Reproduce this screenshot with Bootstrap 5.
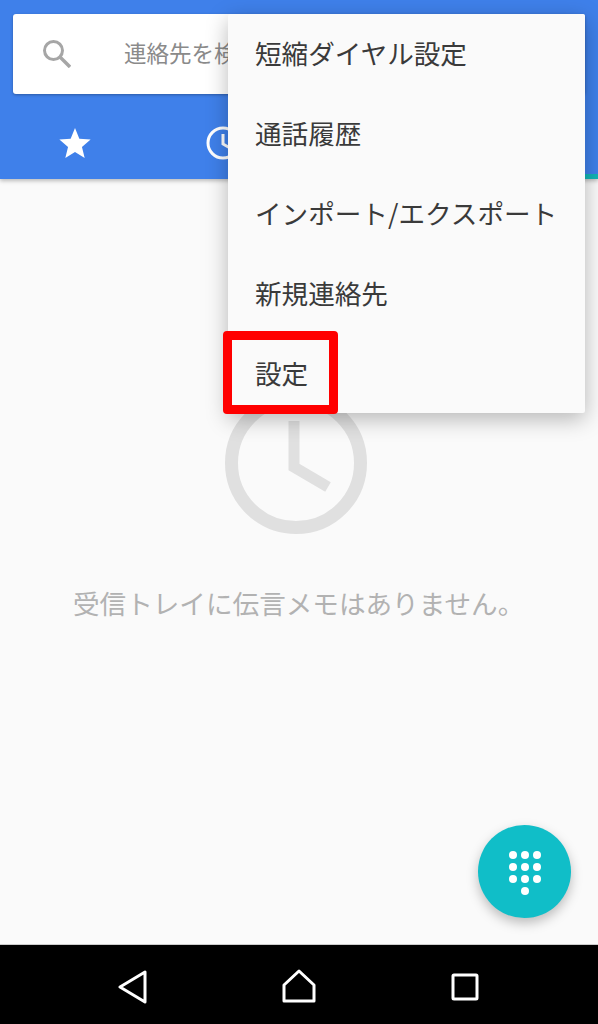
<!DOCTYPE html>
<html lang="ja">
<head>
  <meta charset="UTF-8" />
  <meta name="viewport" content="width=device-width, initial-scale=1" />
  <title>電話</title>
  <link href="https://cdn.jsdelivr.net/npm/bootstrap@5.3.0/dist/css/bootstrap.min.css" rel="stylesheet" />
  <style>
    body {
      font-family: "Noto Sans CJK JP", "Noto Sans", sans-serif;
      background: #fafafa;
      overflow: hidden;
    }
    .phone-screen { width: 598px; height: 1024px; }
    .app-head {
      height: 179px;
      background: #3f80ea;
      box-shadow: 0 2px 4px rgba(0, 0, 0, .25);
      padding: 14px 13px 0;
    }
    .search-box {
      height: 80px;
      border-radius: 3px;
      padding-left: 30px;
      box-shadow: 0 1px 3px rgba(0, 0, 0, .3);
      overflow: hidden;
      white-space: nowrap;
    }
    .search-text { font-size: 22.5px; color: #8a8a8a; margin-left: 53px; padding-bottom: 2px; }
    .tab-row { height: 85px; padding: 12px 0 0 45px; }
    .tab-clock { margin-left: 114px; }
    .tab-strip {
      position: absolute;
      top: 174px;
      right: 0;
      width: 14px;
      height: 5px;
      background: #12b5b5;
    }
    .over-menu {
      position: absolute;
      top: 14px;
      left: 228px;
      width: 357px;
      height: 399px;
      background: #fafafa;
      border-radius: 2px;
      box-shadow: 0 6px 22px rgba(0, 0, 0, .28);
    }
    .menu-row {
      height: 80px;
      padding: 0 0 2px 27px;
      font-size: 26.6px;
      color: #3a3a3a;
      white-space: nowrap;
    }
    .red-frame {
      position: absolute;
      top: 331px;
      left: 223px;
      width: 115px;
      height: 83px;
      border: 9.5px solid #f00;
      border-radius: 4px;
    }
    .empty-view { padding: 213px 0 0 225px; }
    .empty-text { font-size: 26.6px; color: #b2b2b2; margin: 50px 0 0 -152px; line-height: 38px; white-space: nowrap; }
    .clock-big { display: block; }
    .dial-fab {
      position: absolute;
      top: 825px;
      left: 478px;
      width: 93px;
      height: 93px;
      background: #10bec8;
      box-shadow: 0 5px 12px rgba(0, 0, 0, .25);
    }
    .dial-dots { margin-top: 3px; }
    .nav-strip { height: 80px; background: #000; border-top: 1px solid #ccc; }
    .nav-slot { position: absolute; }
    .nav-back { left: 118px; top: 969px; }
    .nav-home { left: 282px; top: 968px; }
    .nav-recent { left: 451px; top: 973px; }
  </style>
</head>
<body>
  <div class="phone-screen position-relative d-flex flex-column">
    <header class="app-head">
      <div class="search-box bg-white d-flex align-items-center">
        <svg width="28" height="28" viewBox="0 0 28 28" fill="none" stroke="#a6a6a6">
          <circle cx="10.5" cy="10.5" r="9" stroke-width="3" />
          <path d="M17 17 L27 27" stroke-width="3.4" />
        </svg>
        <span class="search-text">連絡先を検索</span>
      </div>
      <div class="tab-row d-flex align-items-center">
        <svg width="34" height="32" viewBox="0 0 36 34" fill="#fff">
          <path d="M18 1 L22.6 12.4 L34.6 13.3 L25.4 21.2 L28.3 33 L18 26.6 L7.7 33 L10.6 21.2 L1.4 13.3 L13.4 12.4 Z" />
        </svg>
        <svg class="tab-clock" width="34" height="34" viewBox="0 0 34 34" fill="none" stroke="#fff" stroke-width="3">
          <circle cx="17" cy="17" r="15" />
          <path d="M17 8 V18 L24 22" />
        </svg>
      </div>
    </header>
    <div class="tab-strip"></div>

    <main class="empty-view flex-grow-1">
      <svg class="clock-big" width="142" height="142" viewBox="0 0 142 142" fill="none" stroke="#e0e0e0" stroke-width="13">
        <circle cx="71" cy="71" r="64.5" />
        <path d="M69 29 V75 L103 95" stroke-width="11" />
      </svg>
      <p class="empty-text mb-0">受信トレイに伝言メモはありません。</p>
    </main>

    <div class="over-menu">
      <div class="menu-row d-flex align-items-center">短縮ダイヤル設定</div>
      <div class="menu-row d-flex align-items-center">通話履歴</div>
      <div class="menu-row d-flex align-items-center">インポート/エクスポート</div>
      <div class="menu-row d-flex align-items-center">新規連絡先</div>
      <div class="menu-row d-flex align-items-center">設定</div>
    </div>
    <div class="red-frame"></div>

    <button class="dial-fab btn rounded-circle border-0 p-0 d-flex align-items-center justify-content-center" type="button" aria-label="ダイヤル">
      <svg class="dial-dots" width="34" height="46" viewBox="0 0 34 46" fill="#fff">
        <circle cx="5" cy="5" r="4" /><circle cx="17" cy="5" r="4" /><circle cx="29" cy="5" r="4" />
        <circle cx="5" cy="17" r="4" /><circle cx="17" cy="17" r="4" /><circle cx="29" cy="17" r="4" />
        <circle cx="5" cy="29" r="4" /><circle cx="17" cy="29" r="4" /><circle cx="29" cy="29" r="4" />
        <circle cx="17" cy="41" r="4" />
      </svg>
    </button>

    <nav class="nav-strip">
      <svg class="nav-slot nav-back" width="30" height="36" viewBox="0 0 30 36" fill="none" stroke="#fff" stroke-width="3" stroke-linejoin="round">
        <path d="M27 3 V33 L2 18 Z" />
      </svg>
      <svg class="nav-slot nav-home" width="34" height="36" viewBox="0 0 34 36" fill="none" stroke="#fff" stroke-width="3" stroke-linejoin="round">
        <path d="M17 3 L32 17 V33 H2 V17 Z" />
      </svg>
      <svg class="nav-slot nav-recent" width="28" height="28" viewBox="0 0 28 28" fill="none" stroke="#fff" stroke-width="3" stroke-linejoin="round">
        <rect x="2" y="2" width="24" height="24" rx="1" />
      </svg>
    </nav>
  </div>
  <script src="https://cdn.jsdelivr.net/npm/bootstrap@5.3.0/dist/js/bootstrap.bundle.min.js"></script>
</body>
</html>
